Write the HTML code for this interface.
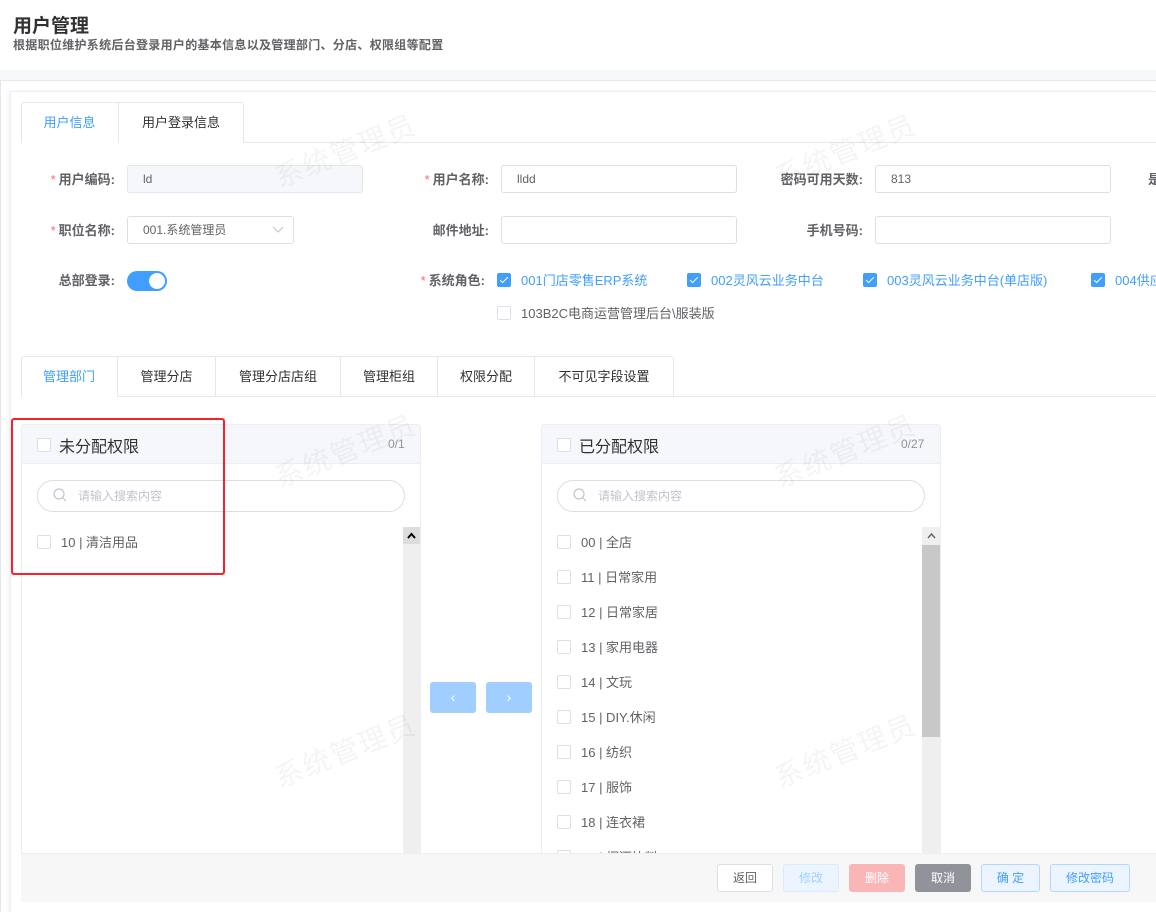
<!DOCTYPE html>
<html><head><meta charset="utf-8"><style>
*{box-sizing:border-box;margin:0;padding:0}
body{width:1156px;height:912px;overflow:hidden;background:#fff;font-family:"Liberation Sans","Noto Sans CJK SC",sans-serif;color:#606266;position:relative;font-size:13px}
.a{position:absolute}
.lbl{position:absolute;font-weight:bold;color:#606266;font-size:13px;text-align:right;white-space:nowrap}
.lbl i{color:#f56c6c;font-style:normal;font-weight:normal;margin-right:3px}
.inp{position:absolute;height:28px;border:1px solid #dcdfe6;border-radius:3px;background:#fff;font-size:12px;color:#606266;padding-left:15px;line-height:26px}
.cb{position:absolute;width:14px;height:14px;border:1px solid #dcdfe6;border-radius:2px;background:#fff}
.cb.on{background:#409eff;border-color:#409eff}
.cb.on:after{content:"";position:absolute;left:4px;top:1px;width:3px;height:7px;border:solid #fff;border-width:0 1px 1px 0;transform:rotate(45deg)}
.role{position:absolute;color:#409eff;font-size:13px;white-space:nowrap}
.tab{position:absolute;height:40px;line-height:40px;text-align:center;font-size:13px;color:#303133;border-right:1px solid #e4e7ed}
.wm{position:absolute;font-size:28px;color:rgba(0,0,0,0.045);transform:rotate(-22deg);white-space:nowrap;letter-spacing:2px}
.item{position:absolute;font-size:13px;color:#606266;white-space:nowrap}
.btn{position:absolute;top:864px;height:28px;line-height:26px;border-radius:3px;font-size:12px;text-align:center;border:1px solid}
</style></head><body>
<div class="a" style="left:13px;top:11px;font-size:19px;font-weight:bold;color:#303133">用户管理</div>
<div class="a" style="left:13px;top:36px;font-size:12px;font-weight:bold;color:#606266;letter-spacing:0.3px">根据职位维护系统后台登录用户的基本信息以及管理部门、分店、权限组等配置</div>
<div class="a" style="left:0;top:70px;width:1156px;height:842px;background:#f7f8fa"></div>
<div class="a" style="left:0;top:80px;width:1156px;height:832px;background:#fff;border-top:1px solid #e4e7ed;border-left:1px solid #e4e7ed"></div>
<div class="a" style="left:10px;top:91px;width:1146px;height:821px;background:#fff;border-top:1px solid #ebeef5;border-left:1px solid #ebeef5;box-shadow:-2px 0 4px rgba(0,0,0,0.05)"></div>

<div class="a" style="left:21px;top:142px;width:1135px;height:1px;background:#e4e7ed"></div>
<div class="a" style="left:21px;top:102px;width:223px;height:41px;border:1px solid #e4e7ed;border-bottom:none;border-radius:3px 3px 0 0;background:#fff"></div>
<div class="a" style="left:118px;top:102px;width:1px;height:41px;background:#e4e7ed"></div>
<div class="a" style="left:22px;top:140px;width:96px;height:3px;background:#fff"></div>
<div class="tab" style="left:21px;top:103px;width:97px;color:#409eff;border:none">用户信息</div>
<div class="tab" style="left:118px;top:103px;width:126px;border:none">用户登录信息</div>

<div class="lbl" style="left:30px;top:169px;width:85px"><i>*</i>用户编码:</div>
<div class="inp" style="left:127px;top:165px;width:236px;background:#f5f7fa;border-color:#e4e7ed">ld</div>
<div class="lbl" style="left:400px;top:169px;width:89px"><i>*</i>用户名称:</div>
<div class="inp" style="left:501px;top:165px;width:236px">lldd</div>
<div class="lbl" style="left:760px;top:169px;width:103px">密码可用天数:</div>
<div class="inp" style="left:875px;top:165px;width:236px">813</div>
<div class="lbl" style="left:1148px;top:169px">是</div>

<div class="lbl" style="left:30px;top:220px;width:85px"><i>*</i>职位名称:</div>
<div class="inp" style="left:127px;top:216px;width:167px">001.系统管理员<svg class="a" style="left:144px;top:9px" width="12" height="8"><path d="M1 1l5 5 5-5" stroke="#c0c4cc" fill="none"/></svg></div>
<div class="lbl" style="left:400px;top:220px;width:89px">邮件地址:</div>
<div class="inp" style="left:501px;top:216px;width:236px"></div>
<div class="lbl" style="left:760px;top:220px;width:103px">手机号码:</div>
<div class="inp" style="left:875px;top:216px;width:236px"></div>

<div class="lbl" style="left:30px;top:270px;width:85px">总部登录:</div>
<div class="a" style="left:127px;top:271px;width:40px;height:20px;border-radius:10px;background:#409eff"><div class="a" style="left:22px;top:2px;width:16px;height:16px;border-radius:50%;background:#fff"></div></div>
<div class="lbl" style="left:400px;top:270px;width:85px"><i>*</i>系统角色:</div>
<div class="cb on" style="left:497px;top:273px"></div><div class="role" style="left:521px;top:270px">001门店零售ERP系统</div>
<div class="cb on" style="left:687px;top:273px"></div><div class="role" style="left:711px;top:270px">002灵风云业务中台</div>
<div class="cb on" style="left:863px;top:273px"></div><div class="role" style="left:887px;top:270px">003灵风云业务中台(单店版)</div>
<div class="cb on" style="left:1091px;top:273px"></div><div class="role" style="left:1115px;top:270px">004供应</div>
<div class="cb" style="left:497px;top:306px"></div><div class="role" style="left:521px;top:303px;color:#606266">103B2C电商运营管理后台\服装版</div>

<div class="a" style="left:21px;top:396px;width:1135px;height:1px;background:#e4e7ed"></div>
<div class="a" style="left:21px;top:356px;width:653px;height:41px;border:1px solid #e4e7ed;border-bottom:none;border-radius:3px 3px 0 0"></div>
<div class="a" style="left:22px;top:396px;width:96px;height:2px;background:#fff"></div>
<div class="tab" style="left:21px;top:357px;width:97px;color:#409eff">管理部门</div>
<div class="tab" style="left:118px;top:357px;width:98px">管理分店</div>
<div class="tab" style="left:216px;top:357px;width:125px">管理分店店组</div>
<div class="tab" style="left:341px;top:357px;width:97px">管理柜组</div>
<div class="tab" style="left:438px;top:357px;width:97px">权限分配</div>
<div class="tab" style="left:535px;top:357px;width:138px;border:none">不可见字段设置</div>

<div class="a" style="left:21px;top:424px;width:400px;height:440px;border:1px solid #ebeef5;border-radius:3px"></div>
<div class="a" style="left:22px;top:425px;width:398px;height:39px;background:#f5f7fa;border-bottom:1px solid #ebeef5"></div>
<div class="cb" style="left:37px;top:438px"></div>
<div class="a" style="left:59px;top:433px;font-size:16px;color:#303133">未分配权限</div>
<div class="a" style="left:388px;top:437px;font-size:12px;color:#909399">0/1</div>
<div class="a" style="left:37px;top:480px;width:368px;height:32px;border:1px solid #dcdfe6;border-radius:16px"></div>
<svg class="a" style="left:53px;top:488px" width="14" height="14"><circle cx="6" cy="6" r="5" stroke="#c0c4cc" fill="none" stroke-width="1.2"/><path d="M10 10l3 3" stroke="#c0c4cc" stroke-width="1.2"/></svg>
<div class="a" style="left:78px;top:487px;font-size:12px;color:#c0c4cc">请输入搜索内容</div>
<div class="cb" style="left:37px;top:535px"></div><div class="item" style="left:61px;top:532px">10 | 清洁用品</div>
<div class="a" style="left:403px;top:527px;width:17px;height:327px;background:#efefef"></div>
<div class="a" style="left:403px;top:527px;width:17px;height:17px;background:#ddd"><svg class="a" style="left:4px;top:5px" width="9" height="7"><path d="M1 6l3.5-4 3.5 4" stroke="#000" stroke-width="2" fill="none"/></svg></div>
<div class="a" style="left:11px;top:418px;width:214px;height:157px;border:2px solid #f5222d;border-radius:3px"></div>

<div class="a" style="left:430px;top:682px;width:46px;height:31px;background:#a0cfff;border-radius:3px;color:#fff;text-align:center;line-height:30px;font-size:14px">‹</div>
<div class="a" style="left:486px;top:682px;width:46px;height:31px;background:#a0cfff;border-radius:3px;color:#fff;text-align:center;line-height:30px;font-size:14px">›</div>

<div class="a" style="left:541px;top:424px;width:400px;height:440px;border:1px solid #ebeef5;border-radius:3px"></div>
<div class="a" style="left:542px;top:425px;width:398px;height:39px;background:#f5f7fa;border-bottom:1px solid #ebeef5"></div>
<div class="cb" style="left:557px;top:438px"></div>
<div class="a" style="left:579px;top:433px;font-size:16px;color:#303133">已分配权限</div>
<div class="a" style="left:901px;top:437px;font-size:12px;color:#909399">0/27</div>
<div class="a" style="left:557px;top:480px;width:368px;height:32px;border:1px solid #dcdfe6;border-radius:16px"></div>
<svg class="a" style="left:573px;top:488px" width="14" height="14"><circle cx="6" cy="6" r="5" stroke="#c0c4cc" fill="none" stroke-width="1.2"/><path d="M10 10l3 3" stroke="#c0c4cc" stroke-width="1.2"/></svg>
<div class="a" style="left:598px;top:487px;font-size:12px;color:#c0c4cc">请输入搜索内容</div>
<div class="cb" style="left:557px;top:535px"></div><div class="item" style="left:581px;top:532px">00 | 全店</div>
<div class="cb" style="left:557px;top:570px"></div><div class="item" style="left:581px;top:567px">11 | 日常家用</div>
<div class="cb" style="left:557px;top:605px"></div><div class="item" style="left:581px;top:602px">12 | 日常家居</div>
<div class="cb" style="left:557px;top:640px"></div><div class="item" style="left:581px;top:637px">13 | 家用电器</div>
<div class="cb" style="left:557px;top:675px"></div><div class="item" style="left:581px;top:672px">14 | 文玩</div>
<div class="cb" style="left:557px;top:710px"></div><div class="item" style="left:581px;top:707px">15 | DIY.休闲</div>
<div class="cb" style="left:557px;top:745px"></div><div class="item" style="left:581px;top:742px">16 | 纺织</div>
<div class="cb" style="left:557px;top:780px"></div><div class="item" style="left:581px;top:777px">17 | 服饰</div>
<div class="cb" style="left:557px;top:815px"></div><div class="item" style="left:581px;top:812px">18 | 连衣裙</div>
<div class="cb" style="left:557px;top:850px"></div><div class="item" style="left:581px;top:847px">19 | 烟酒饮料</div>
<div class="a" style="left:922px;top:527px;width:18px;height:327px;background:#efefef"></div>
<div class="a" style="left:922px;top:545px;width:18px;height:192px;background:#c8c8c8"></div>
<div class="a" style="left:922px;top:527px;width:18px;height:17px;background:#efefef"><svg class="a" style="left:5px;top:5px" width="9" height="7"><path d="M1 6l3.5-4 3.5 4" stroke="#666" stroke-width="1.5" fill="none"/></svg></div>

<div class="wm" style="left:270px;top:130px">系统管理员</div>
<div class="wm" style="left:770px;top:130px">系统管理员</div>
<div class="wm" style="left:270px;top:430px">系统管理员</div>
<div class="wm" style="left:770px;top:430px">系统管理员</div>
<div class="wm" style="left:270px;top:730px">系统管理员</div>
<div class="wm" style="left:770px;top:730px">系统管理员</div>

<div class="a" style="left:21px;top:853px;width:1135px;height:49px;background:#f7f7f7;border-top:1px solid #ebeef5"></div>
<div class="btn" style="left:717px;width:56px;background:#fff;border-color:#dcdfe6;color:#606266">返回</div>
<div class="btn" style="left:783px;width:56px;background:#ecf5ff;border-color:#d9ecff;color:#a0cfff">修改</div>
<div class="btn" style="left:849px;width:56px;background:#fab6b6;border-color:#fab6b6;color:#fff">删除</div>
<div class="btn" style="left:915px;width:56px;background:#909399;border-color:#909399;color:#fff">取消</div>
<div class="btn" style="left:981px;width:59px;background:#ecf5ff;border-color:#b3d8ff;color:#409eff">确 定</div>
<div class="btn" style="left:1050px;width:80px;background:#ecf5ff;border-color:#b3d8ff;color:#409eff">修改密码</div>
</body></html>
